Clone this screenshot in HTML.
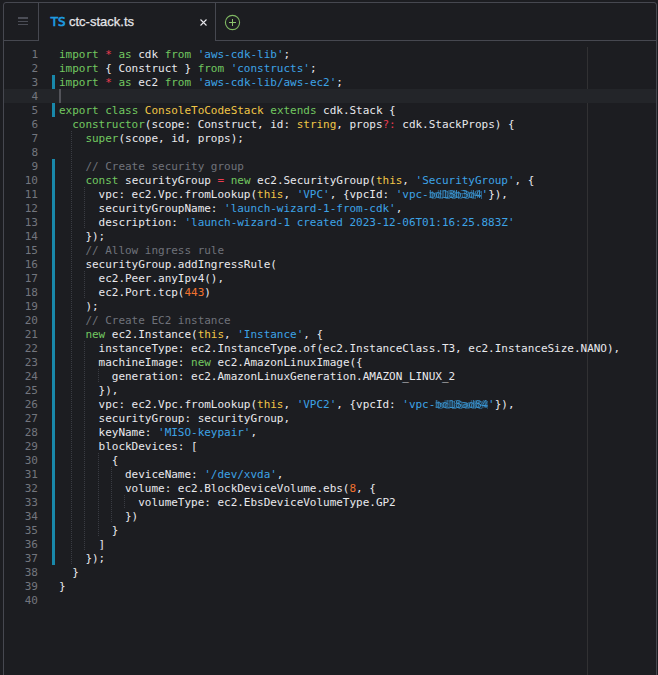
<!DOCTYPE html>
<html lang="en">
<head>
<meta charset="utf-8">
<title>ctc-stack.ts</title>
<style>
html,body{margin:0;padding:0;}
body{width:658px;height:675px;overflow:hidden;background:#1c1d21;position:relative;font-family:"Liberation Sans",sans-serif;}
#frame{position:absolute;left:3px;top:2px;width:652px;height:700px;border:1px solid #464850;border-radius:3px 3px 0 0;box-sizing:content-box;}
#tabs{position:absolute;left:0;top:0;width:652px;height:37px;border-bottom:1px solid #464850;}
#menu{position:absolute;left:0;top:0;width:34px;height:37px;border-right:1px solid #464850;}
#menu i{position:absolute;left:14px;width:10px;height:1.5px;background:#4b4d56;display:block;}
#tab{position:absolute;left:35px;top:0;width:176px;height:38px;border-right:1px solid #464850;background:#1c1d21;}
#tab .ts{position:absolute;left:11.7px;top:11.4px;font:13px/16px "DejaVu Sans Condensed","DejaVu Sans","Liberation Sans",sans-serif;color:#1e9be0;-webkit-text-stroke:0.7px #1e9be0;letter-spacing:0.2px;}
#tab .nm{position:absolute;left:30px;top:11px;font:13px/16px "Liberation Sans",sans-serif;color:#e6e6ea;white-space:nowrap;-webkit-text-stroke:0.25px #e6e6ea;}
#tab svg{position:absolute;left:160px;top:15px;}
#plus{position:absolute;left:220px;top:11px;}
#ed{position:absolute;left:0;top:44px;width:652px;font:11px/14px "DejaVu Sans Mono","Liberation Mono",monospace;color:#e9e9ed;}
.ln{position:relative;height:14px;white-space:pre;}
.ln.act{background:#232529;}
.no{position:absolute;left:0;top:1px;width:34px;text-align:right;color:#73767e;}
.tx{position:absolute;left:55px;top:1px;letter-spacing:-0.021px;}
.d{position:absolute;left:48px;top:0;width:3px;height:14px;background:#1988aa;}
.g{position:absolute;top:0;width:1px;height:14px;background:repeating-linear-gradient(to bottom,#3a3c43 0,#3a3c43 1px,transparent 1px,transparent 2px);}
.cur{position:absolute;left:55px;top:0;width:2px;height:14px;background:#525359;}
#ruler{position:absolute;left:583px;top:44px;width:1px;height:660px;background:#313133;}
.k{color:#72c860;}
.s{color:#3da3e6;}
.y{color:#f1c646;}
.r{color:#ea3c50;}
.n{color:#f2722f;}
.c{color:#6f727a;}
.b{display:inline-block;height:14px;overflow:hidden;vertical-align:top;filter:blur(.5px);color:rgba(61,163,230,.8);text-shadow:2px 1px 0 rgba(61,163,230,.5),-2px 0 0 rgba(61,163,230,.45);}
</style>
</head>
<body>
<div id="frame">
<div id="tabs">
<div id="menu"><i style="top:14.3px;height:1.8px"></i><i style="top:17.7px;height:1.3px"></i><i style="top:21px;height:1.2px"></i></div>
<div id="tab"><span class="ts">TS</span><span class="nm">ctc-stack.ts</span>
<svg width="9" height="9" viewBox="0 0 9 9"><path d="M1.5 1.5 L7.5 7.5 M7.5 1.5 L1.5 7.5" stroke="#e8e8ec" stroke-width="1.1" fill="none"/></svg>
</div>
<svg id="plus" width="18" height="18" viewBox="0 0 18 18"><circle cx="8.5" cy="8.5" r="7.1" fill="none" stroke="#7fb862" stroke-width="1.1"/><path d="M8.5 5 V12 M5 8.5 H12" stroke="#8cc46c" stroke-width="1" fill="none"/></svg>
</div>
<div id="ruler"></div>
<div id="ed">
<div class="ln"><span class="no">1</span><span class="tx"><span class="k">import</span> <span class="r">*</span> <span class="k">as</span> cdk <span class="k">from</span> <span class="s">'aws-cdk-lib'</span>;</span></div>
<div class="ln"><span class="no">2</span><span class="tx"><span class="k">import</span> { Construct } <span class="k">from</span> <span class="s">'constructs'</span>;</span></div>
<div class="ln"><span class="no">3</span><i class="d"></i><span class="tx"><span class="k">import</span> <span class="r">*</span> <span class="k">as</span> ec2 <span class="k">from</span> <span class="s">'aws-cdk-lib/aws-ec2'</span>;</span></div>
<div class="ln act"><span class="no">4</span><i class="cur"></i><span class="tx"></span></div>
<div class="ln"><span class="no">5</span><i class="d"></i><span class="tx"><span class="k">export</span> <span class="k">class</span> <span class="y">ConsoleToCodeStack</span> <span class="k">extends</span> cdk.Stack {</span></div>
<div class="ln"><span class="no">6</span><span class="tx">  <span class="k">constructor</span>(scope: Construct, id: <span class="y">string</span>, props<span class="r">?:</span> cdk.StackProps) {</span></div>
<div class="ln"><span class="no">7</span><i class="g" style="left:67px"></i><span class="tx">    <span class="k">super</span>(scope, id, props);</span></div>
<div class="ln"><span class="no">8</span><i class="g" style="left:67px"></i><span class="tx"></span></div>
<div class="ln"><span class="no">9</span><i class="d"></i><i class="g" style="left:67px"></i><span class="tx">    <span class="c">// Create security group</span></span></div>
<div class="ln"><span class="no">10</span><i class="d"></i><i class="g" style="left:67px"></i><span class="tx">    <span class="k">const</span> securityGroup <span class="r">=</span> <span class="k">new</span> ec2.SecurityGroup(<span class="y">this</span>, <span class="s">'SecurityGroup'</span>, {</span></div>
<div class="ln"><span class="no">11</span><i class="d"></i><i class="g" style="left:67px"></i><i class="g" style="left:80px"></i><span class="tx">      vpc: ec2.Vpc.fromLookup(<span class="y">this</span>, <span class="s">'VPC'</span>, {vpcId: <span class="s">'vpc-<span class="b">bd18b3d4</span>'</span>}),</span></div>
<div class="ln"><span class="no">12</span><i class="d"></i><i class="g" style="left:67px"></i><i class="g" style="left:80px"></i><span class="tx">      securityGroupName: <span class="s">'launch-wizard-1-from-cdk'</span>,</span></div>
<div class="ln"><span class="no">13</span><i class="d"></i><i class="g" style="left:67px"></i><i class="g" style="left:80px"></i><span class="tx">      description: <span class="s">'launch-wizard-1 created 2023-12-06T01:16:25.883Z'</span></span></div>
<div class="ln"><span class="no">14</span><i class="d"></i><i class="g" style="left:67px"></i><span class="tx">    });</span></div>
<div class="ln"><span class="no">15</span><i class="d"></i><i class="g" style="left:67px"></i><span class="tx">    <span class="c">// Allow ingress rule</span></span></div>
<div class="ln"><span class="no">16</span><i class="d"></i><i class="g" style="left:67px"></i><span class="tx">    securityGroup.addIngressRule(</span></div>
<div class="ln"><span class="no">17</span><i class="d"></i><i class="g" style="left:67px"></i><i class="g" style="left:80px"></i><span class="tx">      ec2.Peer.anyIpv4(),</span></div>
<div class="ln"><span class="no">18</span><i class="d"></i><i class="g" style="left:67px"></i><i class="g" style="left:80px"></i><span class="tx">      ec2.Port.tcp(<span class="n">443</span>)</span></div>
<div class="ln"><span class="no">19</span><i class="d"></i><i class="g" style="left:67px"></i><span class="tx">    );</span></div>
<div class="ln"><span class="no">20</span><i class="d"></i><i class="g" style="left:67px"></i><span class="tx">    <span class="c">// Create EC2 instance</span></span></div>
<div class="ln"><span class="no">21</span><i class="d"></i><i class="g" style="left:67px"></i><span class="tx">    <span class="k">new</span> ec2.Instance(<span class="y">this</span>, <span class="s">'Instance'</span>, {</span></div>
<div class="ln"><span class="no">22</span><i class="d"></i><i class="g" style="left:67px"></i><i class="g" style="left:80px"></i><span class="tx">      instanceType: ec2.InstanceType.of(ec2.InstanceClass.T3, ec2.InstanceSize.NANO),</span></div>
<div class="ln"><span class="no">23</span><i class="d"></i><i class="g" style="left:67px"></i><i class="g" style="left:80px"></i><span class="tx">      machineImage: <span class="k">new</span> ec2.AmazonLinuxImage({</span></div>
<div class="ln"><span class="no">24</span><i class="d"></i><i class="g" style="left:67px"></i><i class="g" style="left:80px"></i><i class="g" style="left:94px"></i><span class="tx">        generation: ec2.AmazonLinuxGeneration.AMAZON_LINUX_2</span></div>
<div class="ln"><span class="no">25</span><i class="d"></i><i class="g" style="left:67px"></i><i class="g" style="left:80px"></i><span class="tx">      }),</span></div>
<div class="ln"><span class="no">26</span><i class="d"></i><i class="g" style="left:67px"></i><i class="g" style="left:80px"></i><span class="tx">      vpc: ec2.Vpc.fromLookup(<span class="y">this</span>, <span class="s">'VPC2'</span>, {vpcId: <span class="s">'vpc-<span class="b">bd18ad84</span>'</span>}),</span></div>
<div class="ln"><span class="no">27</span><i class="d"></i><i class="g" style="left:67px"></i><i class="g" style="left:80px"></i><span class="tx">      securityGroup: securityGroup,</span></div>
<div class="ln"><span class="no">28</span><i class="d"></i><i class="g" style="left:67px"></i><i class="g" style="left:80px"></i><span class="tx">      keyName: <span class="s">'MISO-keypair'</span>,</span></div>
<div class="ln"><span class="no">29</span><i class="d"></i><i class="g" style="left:67px"></i><i class="g" style="left:80px"></i><span class="tx">      blockDevices: [</span></div>
<div class="ln"><span class="no">30</span><i class="d"></i><i class="g" style="left:67px"></i><i class="g" style="left:80px"></i><i class="g" style="left:94px"></i><span class="tx">        {</span></div>
<div class="ln"><span class="no">31</span><i class="d"></i><i class="g" style="left:67px"></i><i class="g" style="left:80px"></i><i class="g" style="left:94px"></i><i class="g" style="left:107px"></i><span class="tx">          deviceName: <span class="s">'/dev/xvda'</span>,</span></div>
<div class="ln"><span class="no">32</span><i class="d"></i><i class="g" style="left:67px"></i><i class="g" style="left:80px"></i><i class="g" style="left:94px"></i><i class="g" style="left:107px"></i><span class="tx">          volume: ec2.BlockDeviceVolume.ebs(<span class="n">8</span>, {</span></div>
<div class="ln"><span class="no">33</span><i class="d"></i><i class="g" style="left:67px"></i><i class="g" style="left:80px"></i><i class="g" style="left:94px"></i><i class="g" style="left:107px"></i><i class="g" style="left:120px"></i><span class="tx">            volumeType: ec2.EbsDeviceVolumeType.GP2</span></div>
<div class="ln"><span class="no">34</span><i class="d"></i><i class="g" style="left:67px"></i><i class="g" style="left:80px"></i><i class="g" style="left:94px"></i><i class="g" style="left:107px"></i><span class="tx">          })</span></div>
<div class="ln"><span class="no">35</span><i class="d"></i><i class="g" style="left:67px"></i><i class="g" style="left:80px"></i><i class="g" style="left:94px"></i><span class="tx">        }</span></div>
<div class="ln"><span class="no">36</span><i class="d"></i><i class="g" style="left:67px"></i><i class="g" style="left:80px"></i><span class="tx">      ]</span></div>
<div class="ln"><span class="no">37</span><i class="d"></i><i class="g" style="left:67px"></i><span class="tx">    });</span></div>
<div class="ln"><span class="no">38</span><span class="tx">  }</span></div>
<div class="ln"><span class="no">39</span><span class="tx">}</span></div>
<div class="ln"><span class="no">40</span><span class="tx"></span></div>
</div>
</div>
</body>
</html>
